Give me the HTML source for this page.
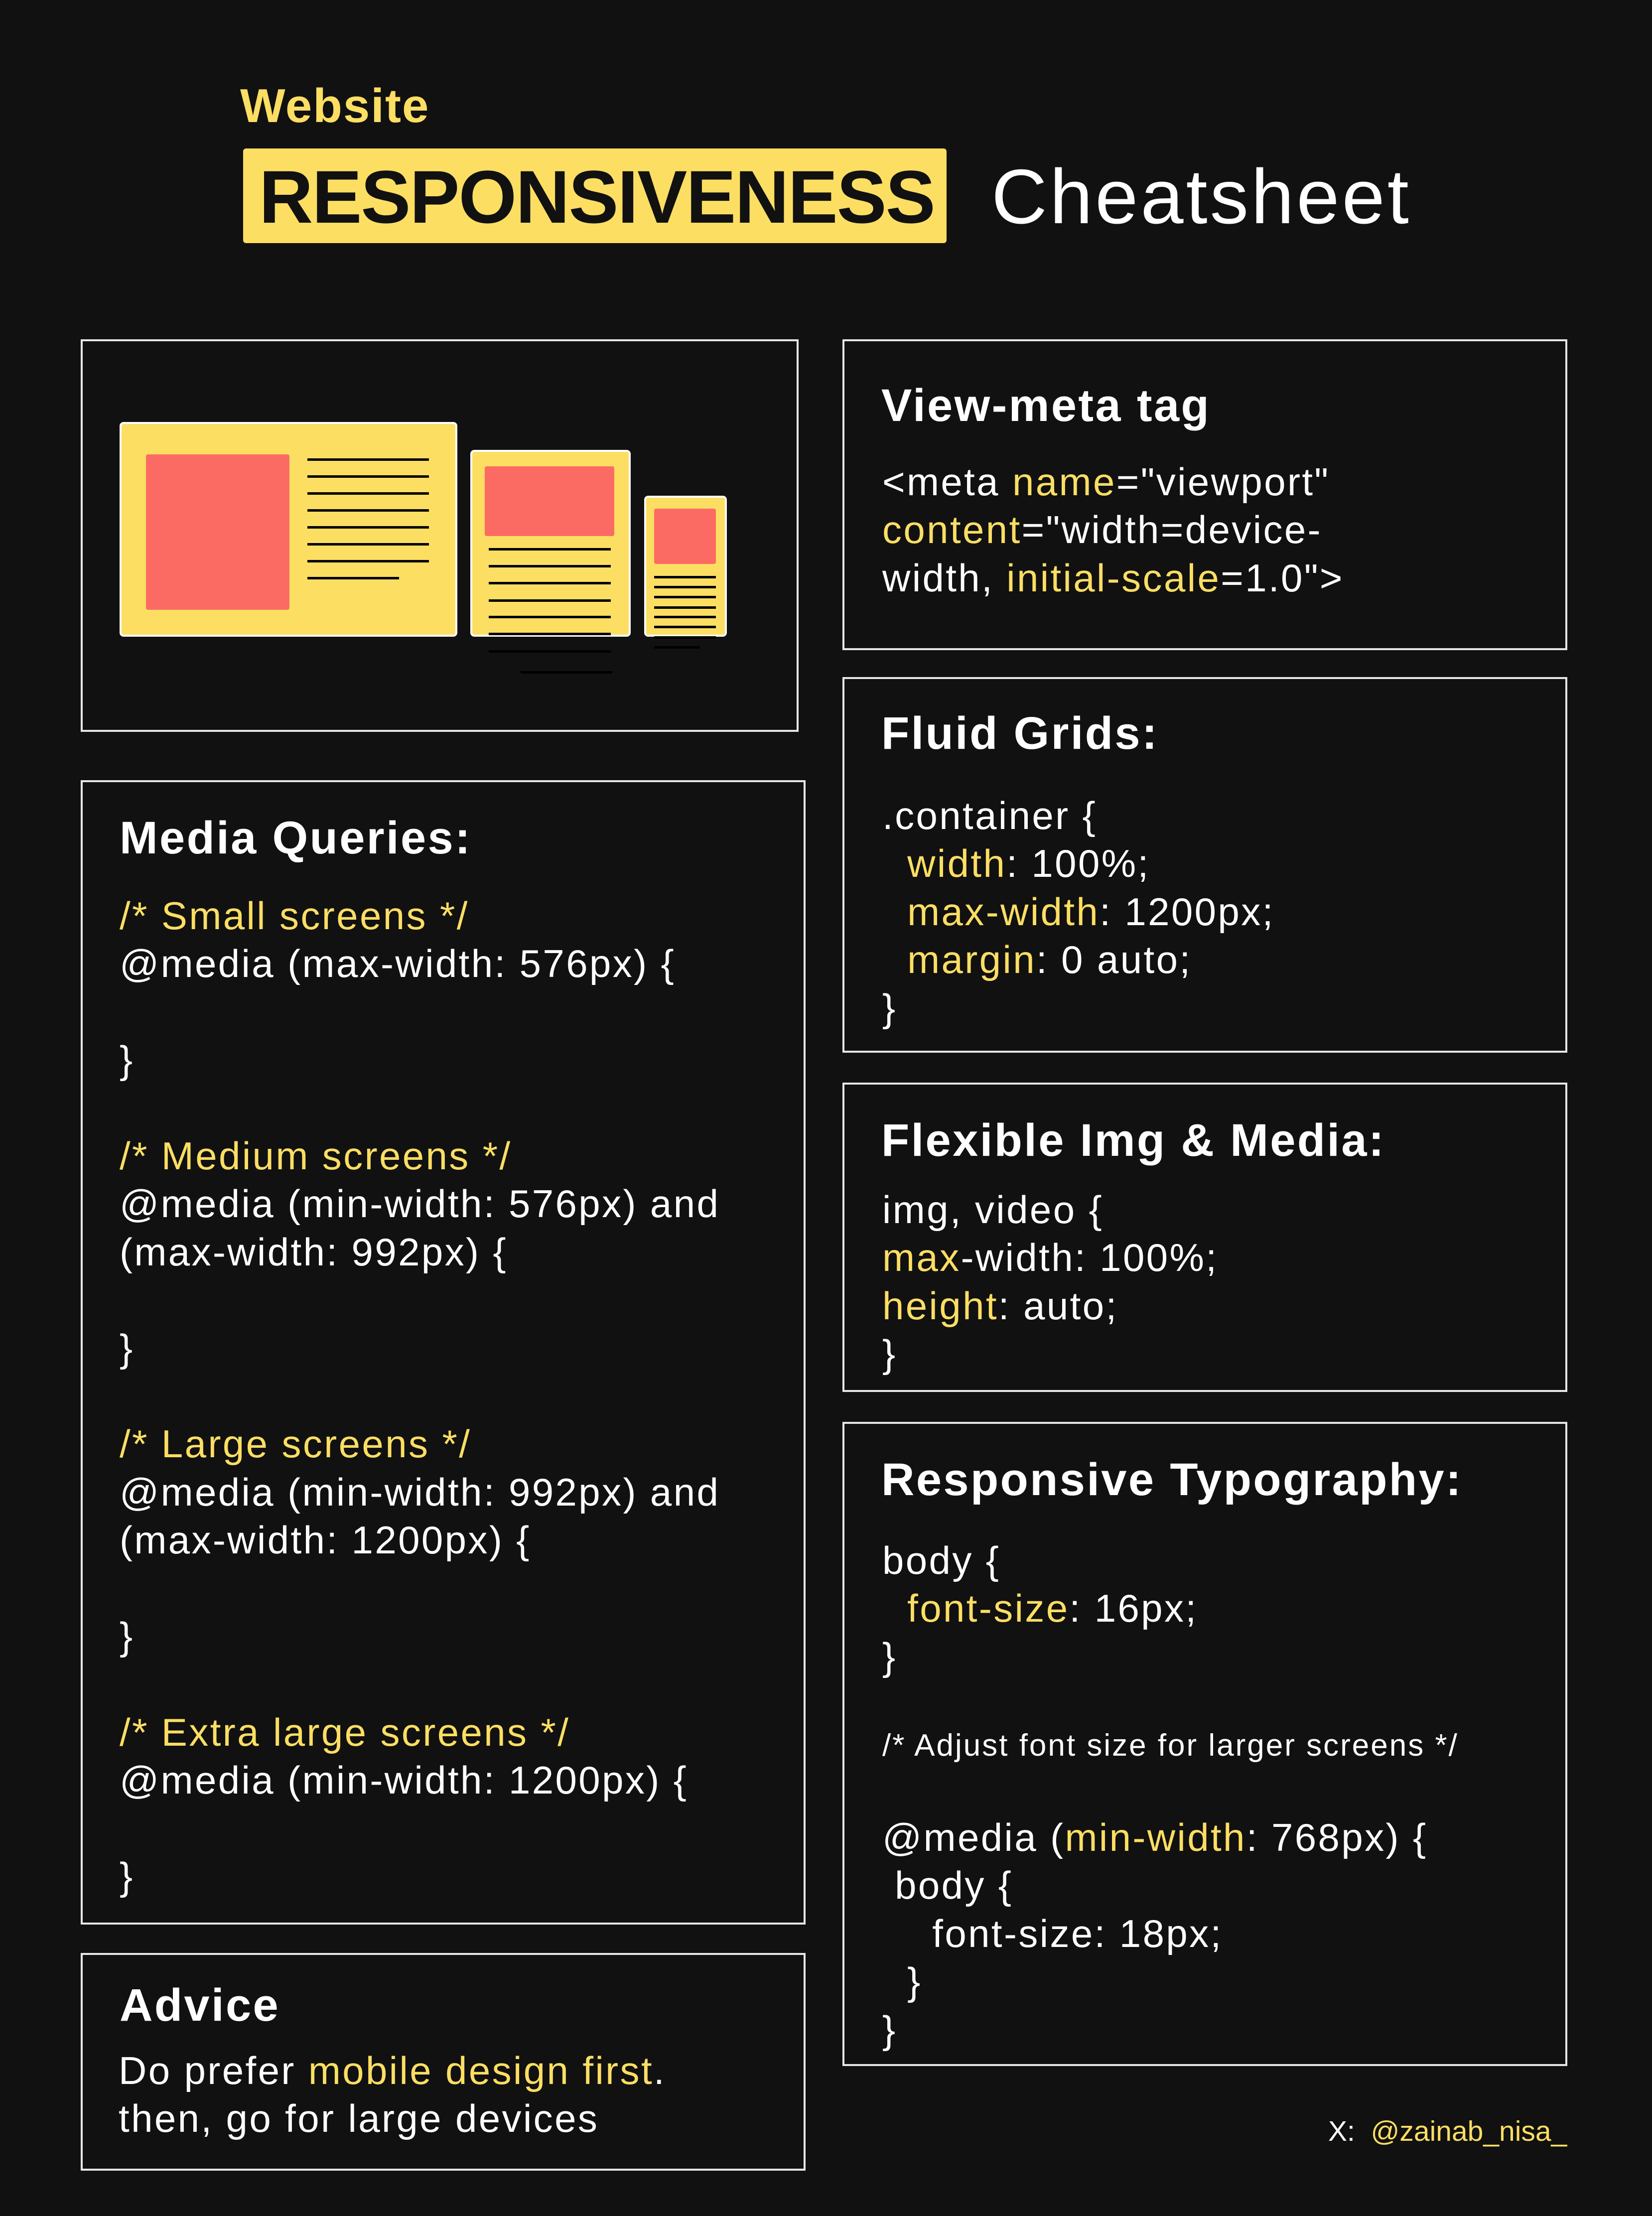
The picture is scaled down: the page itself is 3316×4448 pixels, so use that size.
<!DOCTYPE html>
<html><head><meta charset="utf-8">
<style>
*{margin:0;padding:0;box-sizing:border-box}
html,body{width:3316px;height:4448px;background:#111111;overflow:hidden}
body{position:relative;font-family:"Liberation Sans",sans-serif;color:#fff}
.box{position:absolute;border:4px solid #e6e6e6}
.t{position:absolute;white-space:pre;font-size:78px;line-height:96.4px;letter-spacing:3.4px}
.h{position:absolute;white-space:pre;font-size:92px;line-height:110px;font-weight:bold;letter-spacing:3.4px}
.y{color:#FCDE63}
.dev{position:absolute;background:#FCDE63;border:4px solid #fff;border-radius:8px}
.r{position:absolute;background:#FC6B63;border-radius:4px}
.l{position:absolute;height:5px;background:#000}
</style></head><body>

<div style="position:absolute;left:482px;top:158px;font-size:96px;font-weight:bold;color:#FCDE63;line-height:110px;letter-spacing:2px">Website</div>
<div style="position:absolute;left:488px;top:298px;width:1412px;height:190px;background:#FCDE63;border-radius:6px"></div>
<div style="position:absolute;left:520px;top:310px;width:1380px;font-size:150px;font-weight:bold;color:#111;line-height:170px;letter-spacing:-2px;white-space:nowrap">RESPONSIVENESS</div>
<div style="position:absolute;left:1990px;top:310px;font-size:155px;line-height:170px;white-space:nowrap;letter-spacing:5px">Cheatsheet</div>

<!-- illustration -->
<div class="box" style="left:162px;top:681px;width:1441px;height:788px"></div>
<div class="dev" style="left:240px;top:847px;width:678px;height:431px"></div>
<div class="r" style="left:293px;top:912px;width:288px;height:312px"></div>
<div class="l" style="left:617px;top:920px;width:244px"></div>
<div class="l" style="left:617px;top:954px;width:244px"></div>
<div class="l" style="left:617px;top:988px;width:244px"></div>
<div class="l" style="left:617px;top:1022px;width:244px"></div>
<div class="l" style="left:617px;top:1056px;width:244px"></div>
<div class="l" style="left:617px;top:1090px;width:244px"></div>
<div class="l" style="left:617px;top:1124px;width:244px"></div>
<div class="l" style="left:617px;top:1158px;width:184px"></div>

<div class="dev" style="left:944px;top:903px;width:322px;height:375px"></div>
<div class="r" style="left:973px;top:936px;width:260px;height:140px"></div>
<div class="l" style="left:981px;top:1100px;width:245px"></div>
<div class="l" style="left:981px;top:1134px;width:245px"></div>
<div class="l" style="left:981px;top:1168px;width:245px"></div>
<div class="l" style="left:981px;top:1203px;width:245px"></div>
<div class="l" style="left:981px;top:1236px;width:245px"></div>
<div class="l" style="left:981px;top:1270px;width:245px"></div>
<div class="l" style="left:981px;top:1305px;width:245px"></div>
<div class="l" style="left:1045px;top:1347px;width:184px"></div>

<div class="dev" style="left:1293px;top:995px;width:166px;height:283px"></div>
<div class="r" style="left:1313px;top:1021px;width:124px;height:111px"></div>
<div class="l" style="left:1313px;top:1156px;width:124px"></div>
<div class="l" style="left:1313px;top:1176px;width:124px"></div>
<div class="l" style="left:1313px;top:1196px;width:124px"></div>
<div class="l" style="left:1313px;top:1217px;width:124px"></div>
<div class="l" style="left:1313px;top:1236px;width:124px"></div>
<div class="l" style="left:1313px;top:1256px;width:124px"></div>
<div class="l" style="left:1313px;top:1277px;width:124px"></div>
<div class="l" style="left:1313px;top:1297px;width:92px"></div>

<!-- view-meta -->
<div class="box" style="left:1691px;top:681px;width:1455px;height:624px"></div>
<div class="h" style="left:1769px;top:759px">View-meta tag</div>
<div class="t" style="left:1771px;top:919px">&lt;meta <span class="y">name</span>="viewport"
<span class="y">content</span>="width=device-
width, <span class="y">initial-scale</span>=1.0"&gt;</div>

<!-- fluid -->
<div class="box" style="left:1691px;top:1359px;width:1455px;height:754px"></div>
<div class="h" style="left:1769px;top:1417px">Fluid Grids:</div>
<div class="t" style="left:1771px;top:1589px">.container {
  <span class="y">width</span>: 100%;
  <span class="y">max-width</span>: 1200px;
  <span class="y">margin</span>: 0 auto;
}</div>

<!-- flexible -->
<div class="box" style="left:1691px;top:2173px;width:1455px;height:621px"></div>
<div class="h" style="left:1769px;top:2234px">Flexible Img &amp; Media:</div>
<div class="t" style="left:1771px;top:2380px">img, video {
<span class="y">max</span>-width: 100%;
<span class="y">height</span>: auto;
}</div>

<!-- typography -->
<div class="box" style="left:1691px;top:2854px;width:1455px;height:1293px"></div>
<div class="h" style="left:1769px;top:2915px">Responsive Typography:</div>
<div class="t" style="left:1771px;top:3084px">body {
  <span class="y">font-size</span>: 16px;
}</div>
<div class="t" style="left:1771px;top:3469px;font-size:62px;line-height:70px;letter-spacing:3px">/* Adjust font size for larger screens */</div>
<div class="t" style="left:1771px;top:3640px">@media (<span class="y">min-width</span>: 768px) {
 body {
    font-size: 18px;
  }
}</div>

<!-- media queries -->
<div class="box" style="left:162px;top:1566px;width:1455px;height:2297px"></div>
<div class="h" style="left:240px;top:1627px">Media Queries:</div>
<div class="t" style="left:240px;top:1790px"><span class="y">/* Small screens */</span>
@media (max-width: 576px) {

}

<span class="y">/* Medium screens */</span>
@media (min-width: 576px) and
(max-width: 992px) {

}

<span class="y">/* Large screens */</span>
@media (min-width: 992px) and
(max-width: 1200px) {

}

<span class="y">/* Extra large screens */</span>
@media (min-width: 1200px) {

}</div>

<!-- advice -->
<div class="box" style="left:162px;top:3920px;width:1455px;height:437px"></div>
<div class="h" style="left:240px;top:3970px">Advice</div>
<div class="t" style="left:238px;top:4108px">Do prefer <span class="y">mobile design first</span>.
then, go for large devices</div>

<div style="position:absolute;left:2666px;top:4244px;font-size:57px;line-height:68px;white-space:pre">X:  <span class="y">@zainab_nisa_</span></div>
</body></html>
